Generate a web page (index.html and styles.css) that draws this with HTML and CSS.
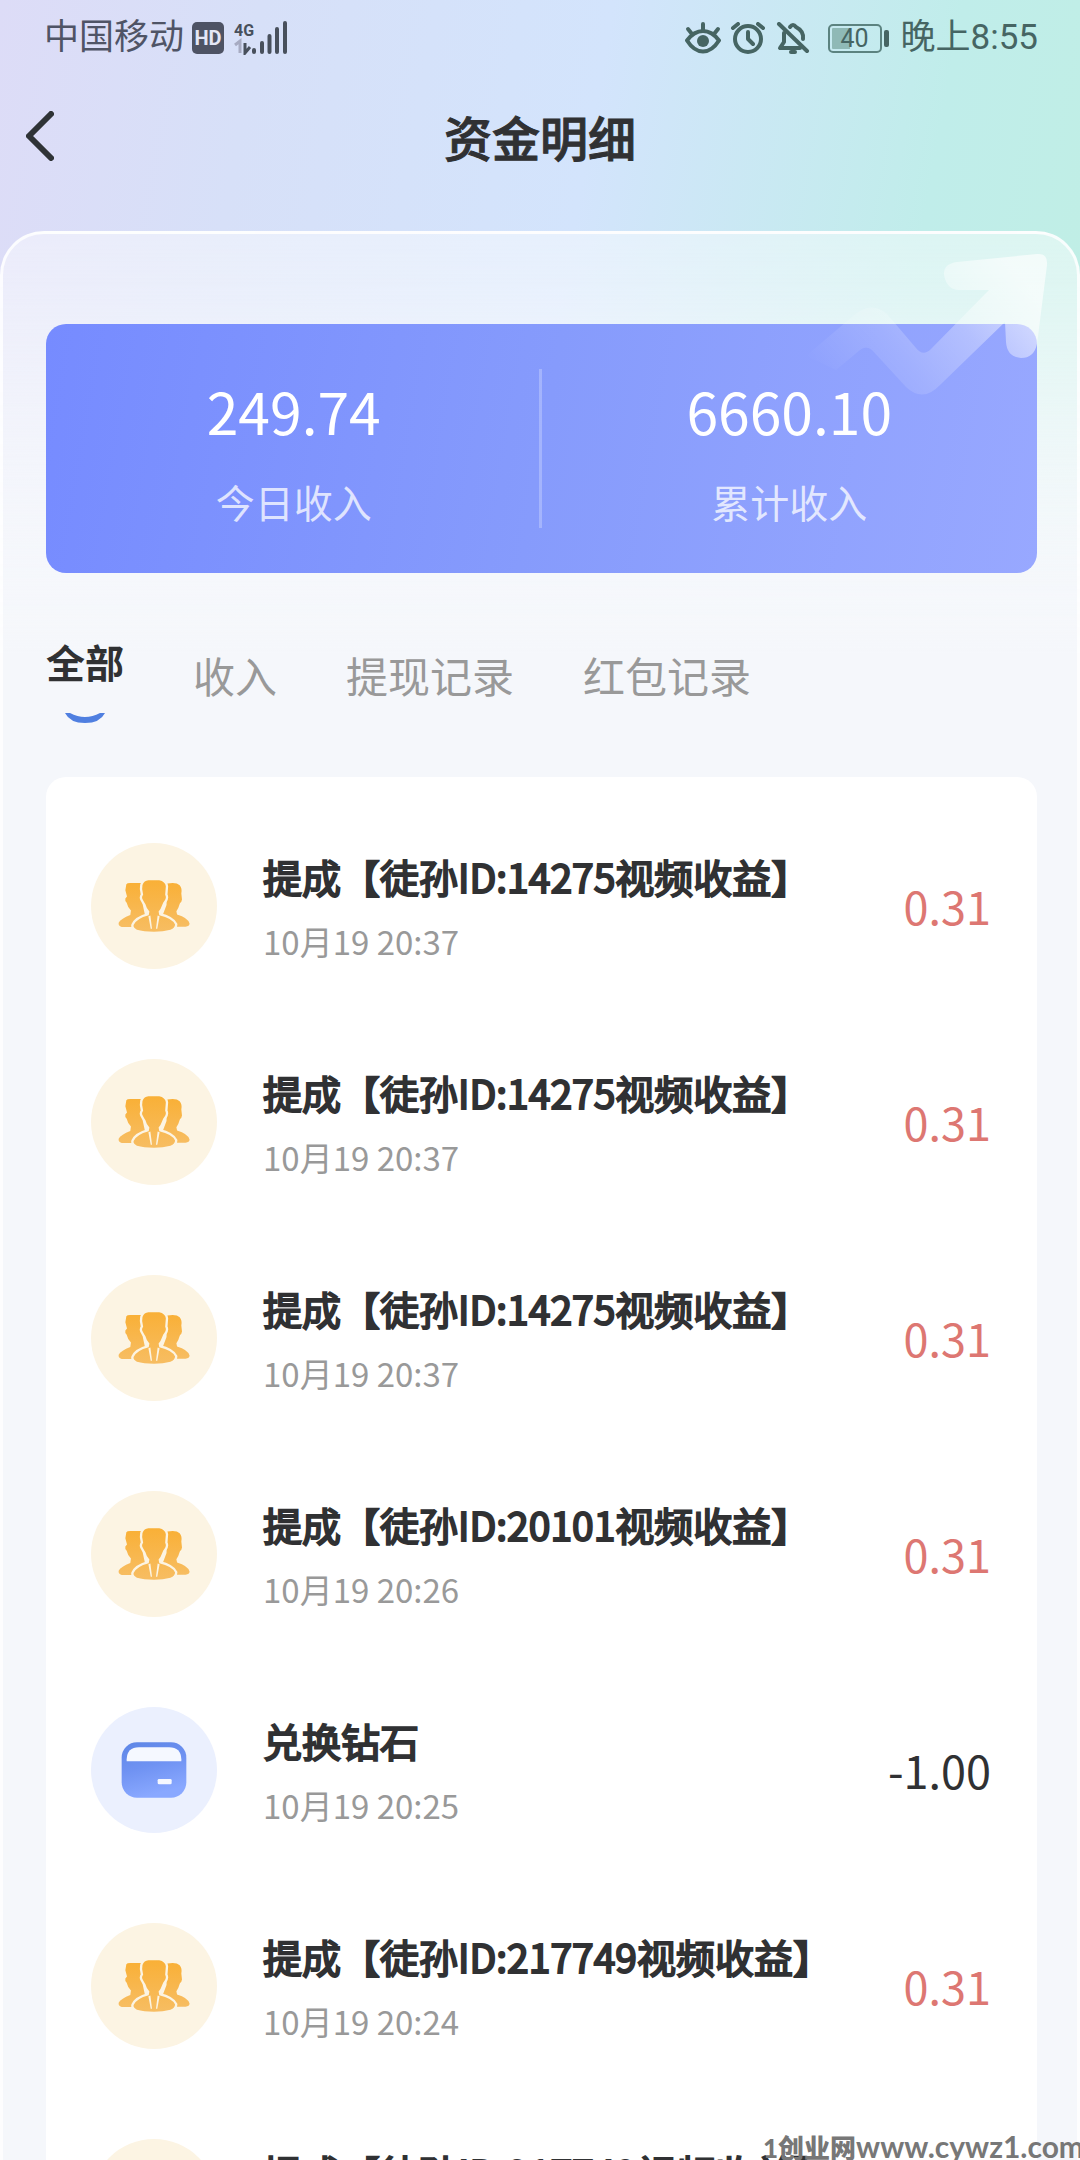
FILE: index.html
```html
<!DOCTYPE html>
<html lang="zh-CN">
<head>
    <meta charset="UTF-8">
    <meta name="viewport" content="width=device-width, initial-scale=1.0">
    <title>资金明细</title>
    <link rel="stylesheet" href="styles.css">
</head>
<body>
    <!-- Общие иконки -->
    <svg class="sprite" width="0" height="0" aria-hidden="true">
        <defs>
            <linearGradient id="gold" x1="0" y1="0" x2="0" y2="1">
                <stop offset="0" stop-color="#f9b037"/>
                <stop offset="1" stop-color="#f7bd62"/>
            </linearGradient>
            <linearGradient id="blue" x1="0" y1="0" x2="0.3" y2="1">
                <stop offset="0" stop-color="#5d86e6"/>
                <stop offset="0.5" stop-color="#6f92f2"/>
                <stop offset="1" stop-color="#89a8ff"/>
            </linearGradient>
        </defs>
        <symbol id="icon-people" viewBox="110 146 224 164">
            <path fill="url(#gold)" d="M138 162Q140 158 150 158H188V225L196 262 160 292H124Q112 288 115 278 122 266 150 255L152 242Q141 229 139 218 133 214 135 205L140 199 135 180Z"/>
            <path fill="url(#gold)" d="M262 160Q290 155 300 165 308 174 305 190L307 208Q306 216 301 219 297 234 290 244L292 254Q325 264 330 281 330 289 318 291H284L246 262 260 225Z"/>
            <path fill="url(#gold)" stroke="#fcf4e3" stroke-width="14" paint-order="stroke" d="M187 164Q192 151 205 150H238Q256 154 258 168L256 194Q261 203 254 212 249 217 247 225 243 237 236 245L238 256Q277 265 286 284 286 294 272 300 250 306 222 306 190 306 170 300 158 294 160 286 168 266 206 256L208 245Q199 236 196 223 191 215 188 209 183 201 189 194L186 176Z"/>
            <path fill="#fcf4e3" d="M205 259 211 257 216 297 212 297ZM239 259 233 257 228 297 232 297Z"/>
        </symbol>
        <symbol id="icon-wallet" viewBox="122 152 202 174">
            <rect x="126" y="156" width="194" height="166" rx="46" fill="url(#blue)"/>
            <path fill="#f5f8ff" d="M141 213V207Q142 171 178 171H268Q304 171 305 207V213Z"/>
            <rect x="234" y="266" width="42" height="16" rx="4" fill="#f5f8ff"/>
        </symbol>
    </svg>

    <div class="app">
        <div class="status-bar">
            <div class="status-group">
                <span>中国移动</span>
                <svg class="status-hd" viewBox="0 0 32 32" aria-hidden="true">
                    <rect width="32" height="32" rx="5" fill="#4e5364"/>
                    <text x="16" y="23" text-anchor="middle" class="hd-text">HD</text>
                </svg>
                <svg class="status-signal" viewBox="0 0 54 34" aria-hidden="true">
                    <text x="0" y="15" class="net-text">4G</text>
                    <path d="M1 24 6 20V32" fill="none" stroke="#a7abc2" stroke-width="3"/>
                    <path d="M11 22V32L16 26" fill="none" stroke="#48505c" stroke-width="3"/>
                    <path d="M20 29V31M28 22V31M35.500 15V31M43 8V31M51 2V31" stroke="#48505c" stroke-width="4" stroke-linecap="round"/>
                </svg>
            </div>
            <div class="status-group status-right">
                <svg class="status-icon" viewBox="0 0 36 32" aria-hidden="true">
                    <path d="M2 18.500Q9 9 18 9T34 18.500Q27 29.500 18 29.500T2 18.500Z"/>
                    <path d="M18 9V2M7 12 3 7M29 12 33 7"/>
                    <circle cx="18" cy="19" r="6" fill="currentColor" stroke="none"/>
                </svg>
                <svg class="status-icon" viewBox="0 0 36 32" aria-hidden="true">
                    <circle cx="18" cy="17" r="13"/>
                    <path d="M18 10V17L23 22M3 6 8 2M33 6 28 2"/>
                </svg>
                <svg class="status-icon" viewBox="0 0 36 32" aria-hidden="true">
                    <path d="M4 2 32 29"/>
                    <path d="M15 5Q18 1 21 5 29 9 28 17M9 11V20L5 26H25"/>
                    <path d="M16 30H20"/>
                </svg>
                <div class="battery"><span>40</span></div>
                <span>晚上8:55</span>
            </div>
        </div>

        <header class="nav-bar">
            <button class="back" type="button" aria-label="返回">
                <svg viewBox="0 0 28 50" aria-hidden="true"><path d="M25 3 3 25 25 47"/></svg>
            </button>
            <h1>资金明细</h1>
        </header>

        <main class="panel">
            <section class="summary">
                <div class="summary-item">
                    <strong>249.74</strong>
                    <span>今日收入</span>
                </div>
                <div class="summary-item">
                    <strong>6660.10</strong>
                    <span>累计收入</span>
                </div>
            </section>
            <svg class="trend" viewBox="0 0 250 160" aria-hidden="true">
                <defs>
                    <linearGradient id="trend-fill" gradientUnits="userSpaceOnUse" x1="40" y1="160" x2="205" y2="20">
                        <stop offset="0" stop-color="#fff" stop-opacity="0"/>
                        <stop offset="0.35" stop-color="#fff" stop-opacity="0.14"/>
                        <stop offset="0.65" stop-color="#fff" stop-opacity="0.3"/>
                        <stop offset="1" stop-color="#fff" stop-opacity="0.65"/>
                    </linearGradient>
                </defs>
                <path fill="url(#trend-fill)" d="M5 116 52 76Q70 60 86 74L115 108Q122 117 130 109L188 50H158Q146 50 143 35 142 24 156 22L236 14Q247 13 246 25L236 104Q233 118 220 118 206 117 205 102L204 82 139 145Q122 163 105 147L71 110Q65 105 59 110L35 130Z"/>
            </svg>

            <nav class="tabs">
                <button class="tab active" type="button">全部
                    <svg class="tab-mark" viewBox="0 0 40 10" aria-hidden="true"><path d="M0 0H5Q20 8 35 0H40Q35 10 20 10T0 0Z"/></svg>
                </button>
                <button class="tab" type="button">收入</button>
                <button class="tab" type="button">提现记录</button>
                <button class="tab" type="button">红包记录</button>
            </nav>

            <ul class="records">
                <li class="record">
                    <span class="record-icon"><svg><use href="#icon-people"/></svg></span>
                    <div class="record-info">
                        <h2>提成【徒孙ID:14275视频收益】</h2>
                        <time>10月19 20:37</time>
                    </div>
                    <span class="amount income">0.31</span>
                </li>
                <li class="record">
                    <span class="record-icon"><svg><use href="#icon-people"/></svg></span>
                    <div class="record-info">
                        <h2>提成【徒孙ID:14275视频收益】</h2>
                        <time>10月19 20:37</time>
                    </div>
                    <span class="amount income">0.31</span>
                </li>
                <li class="record">
                    <span class="record-icon"><svg><use href="#icon-people"/></svg></span>
                    <div class="record-info">
                        <h2>提成【徒孙ID:14275视频收益】</h2>
                        <time>10月19 20:37</time>
                    </div>
                    <span class="amount income">0.31</span>
                </li>
                <li class="record">
                    <span class="record-icon"><svg><use href="#icon-people"/></svg></span>
                    <div class="record-info">
                        <h2>提成【徒孙ID:20101视频收益】</h2>
                        <time>10月19 20:26</time>
                    </div>
                    <span class="amount income">0.31</span>
                </li>
                <li class="record">
                    <span class="record-icon exchange"><svg><use href="#icon-wallet"/></svg></span>
                    <div class="record-info">
                        <h2>兑换钻石</h2>
                        <time>10月19 20:25</time>
                    </div>
                    <span class="amount">-1.00</span>
                </li>
                <li class="record">
                    <span class="record-icon"><svg><use href="#icon-people"/></svg></span>
                    <div class="record-info">
                        <h2>提成【徒孙ID:217749视频收益】</h2>
                        <time>10月19 20:24</time>
                    </div>
                    <span class="amount income">0.31</span>
                </li>
                <li class="record">
                    <span class="record-icon"><svg><use href="#icon-people"/></svg></span>
                    <div class="record-info">
                        <h2>提成【徒孙ID:217749视频收益】</h2>
                    </div>
                </li>
            </ul>
        </main>

        <div class="watermark"><b>1创业网</b>www.cywz1.com</div>
    </div>
</body>
</html>
```
FILE: styles.css
```css
* {
    box-sizing: border-box;
}

body {
    margin: 0;
    font-family: "Noto Sans CJK SC", "Noto Sans", sans-serif;
    color: #303133;
    background: #f5f7fb;
}

h1, h2, ul {
    margin: 0;
    padding: 0;
}

button {
    padding: 0;
    border: 0;
    background: none;
    font-family: inherit;
    color: inherit;
}

.sprite {
    position: absolute;
}

.app {
    position: relative;
    height: 100vh;
    overflow: hidden;
    background:
        linear-gradient(to bottom, rgba(245, 247, 251, 0) 280px, #f5f7fb 660px),
        linear-gradient(100deg, #dddcf7 0%, #d7e0f8 18%, #d3e4fc 42%, #c0edea 66%, #c0efe3 84%, #bdeee9 100%);
}

/* Строка состояния */
.status-bar {
    display: flex;
    justify-content: space-between;
    align-items: center;
    height: 76px;
    padding: 0 42px 0 44px;
    font-family: Roboto, "Noto Sans CJK SC", sans-serif;
    font-size: 35px;
    font-weight: 400;
    line-height: 40px;
    color: #4f5466;
}

.status-group {
    display: flex;
    align-items: center;
    gap: 8px;
}

.status-right {
    gap: 9px;
    color: #466563;
}

.status-hd {
    width: 32px;
    height: 32px;
}

.status-signal {
    width: 54px;
    height: 34px;
    margin-left: 2px;
}

.hd-text {
    font: bold 20px Roboto, sans-serif;
    fill: #e4e6f5;
}

.net-text {
    font: bold 16px Roboto, sans-serif;
    fill: #48505c;
}

.status-icon {
    width: 36px;
    height: 32px;
    fill: none;
    stroke: currentColor;
    stroke-width: 4;
    stroke-linecap: round;
    stroke-linejoin: round;
}

.battery {
    position: relative;
    width: 54px;
    height: 29px;
    margin: 0 10px 0 8px;
    border: 2px solid #5c8380;
    border-radius: 5px;
    background: linear-gradient(to right, #8fb9b6 40%, transparent 40%) content-box;
    padding: 2px;
    font-size: 25px;
    line-height: 21px;
    text-align: center;
}

.battery::after {
    content: "";
    position: absolute;
    top: 4px;
    right: -9px;
    width: 5px;
    height: 17px;
    border-radius: 2px;
    background: #466563;
}

/* Заголовок */
.nav-bar {
    display: grid;
    grid-template-columns: 80px 1fr 80px;
    align-items: center;
    height: 120px;
}

.nav-bar h1 {
    font-size: 48px;
    font-weight: 500;
    line-height: 60px;
    text-align: center;
    -webkit-text-stroke: 1px currentColor;
}

.back {
    height: 60px;
    padding-left: 26px;
    text-align: left;
}

.back svg {
    display: block;
    width: 28px;
    height: 50px;
    fill: none;
    stroke: #2f3336;
    stroke-width: 6;
    stroke-linecap: round;
    stroke-linejoin: round;
}

/* Основная панель */
.panel {
    position: relative;
    margin-top: 35px;
    padding: 90px 40px 0 43px;
    border: 3px solid rgba(255, 255, 255, 0.8);
    border-bottom: 0;
    border-radius: 44px 44px 0 0;
    background: linear-gradient(to bottom, rgba(255, 255, 255, 0.45), rgba(250, 251, 253, 0.6) 160px, #f5f7fb 420px);
}

.summary {
    position: relative;
    display: grid;
    grid-template-columns: 1fr 1fr;
    padding: 56px 0 47px;
    border-radius: 20px;
    background: linear-gradient(100deg, #768bff, #869bfc 50%, #98a8ff);
    color: #fff;
}

.summary::after {
    content: "";
    position: absolute;
    top: 45px;
    bottom: 45px;
    left: 50%;
    width: 3px;
    margin-left: -3px;
    background: rgba(255, 255, 255, 0.25);
}

.summary-item {
    display: flex;
    flex-direction: column;
    align-items: center;
    gap: 36px;
}

.summary-item strong {
    font-size: 57px;
    font-weight: 400;
    line-height: 60px;
}

.summary-item span {
    font-size: 39px;
    line-height: 50px;
    color: rgba(255, 255, 255, 0.75);
}

.trend {
    position: absolute;
    top: 6px;
    right: 26px;
    width: 250px;
    height: 160px;
}

.tabs {
    display: flex;
    align-items: center;
    gap: 69px;
    height: 204px;
}

.tab {
    font-size: 42px;
    line-height: 60px;
    color: #999;
}

.tab.active {
    display: flex;
    flex-direction: column;
    align-items: center;
    gap: 22px;
    padding-top: 4px;
    font-size: 39px;
    font-weight: 700;
    color: #303133;
}

.tab-mark {
    width: 40px;
    height: 10px;
    fill: #4f7fe0;
}

/* Список операций */
.records {
    list-style: none;
    padding: 21px 46px 20px 45px;
    border-radius: 20px;
    background: #fff;
}

.record {
    display: flex;
    align-items: center;
    height: 216px;
}

.record-icon {
    display: flex;
    align-items: center;
    justify-content: center;
    width: 126px;
    height: 126px;
    border-radius: 50%;
    background: #fcf4e3;
}

.record-icon svg {
    width: 74px;
    height: 54px;
}

.record-icon.exchange {
    background: #ebf0fe;
}

.record-icon.exchange svg {
    width: 68px;
    height: 58px;
}

.record-info {
    flex: 1;
    display: flex;
    flex-direction: column;
    gap: 14px;
    height: 116px;
    margin-left: 46px;
}

/* обычное начертание с обводкой вместо полужирного */
.record-info h2 {
    font-size: 39px;
    font-weight: 400;
    line-height: 56px;
    white-space: nowrap;
    -webkit-text-stroke: 2px currentColor;
}

.record-info time {
    font-size: 33px;
    line-height: 46px;
    color: #999;
}

.amount {
    font-size: 45px;
    line-height: 60px;
}

.amount.income {
    color: #dd7772;
}

.watermark {
    position: absolute;
    right: -4px;
    bottom: -4px;
    font-family: Lato, "Noto Sans CJK SC", sans-serif;
    font-size: 30px;
    font-weight: 700;
    line-height: 32px;
    white-space: nowrap;
    color: #777;
}

.watermark b {
    font-size: 26px;
    font-weight: 900;
}
```
